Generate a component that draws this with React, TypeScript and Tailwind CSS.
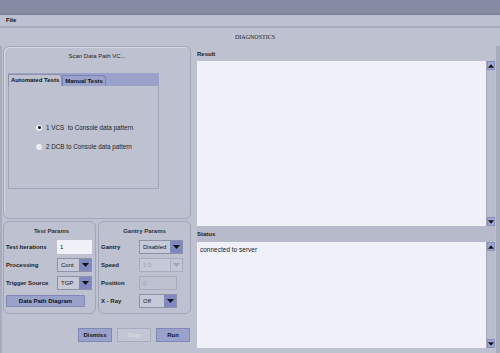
import React from 'react'

const font = { fontFamily: '"Liberation Sans", Arial, sans-serif' }

function Arrow({ up = false, dim = false }: { up?: boolean; dim?: boolean }) {
  return (
    <svg width="7" height="4" viewBox="0 0 7 4">
      <polygon points={up ? '0,4 7,4 3.5,0' : '0,0 7,0 3.5,4'} fill={dim ? '#9ea2b6' : '#111'} />
    </svg>
  )
}

function Select({ value, w, disabled = false }: { value: string; w: string; disabled?: boolean }) {
  return (
    <div className={`flex h-[14px] ${w} border ${disabled ? 'border-[#a9acbd]' : 'border-[#8e92a8]'} bg-[#c6c9d7]`}>
      <span className={`flex-1 px-[3px] text-[6px] leading-[12px] ${disabled ? 'text-[#9a9eb2]' : 'text-[#111]'}`}>{value}</span>
      <span className={`flex w-[12px] items-center justify-center ${disabled ? 'bg-[#c3c6d4] border-l border-[#a9acbd]' : 'bg-[#7f89bf]'}`}>
        <Arrow dim={disabled} />
      </span>
    </div>
  )
}

function Scrollbar() {
  return (
    <div className="flex w-[9px] flex-col justify-between border-l border-[#a3a7bb] bg-[#b9bccc]">
      <div className="flex h-[9px] items-center justify-center bg-[#a0a8d0] border border-[#8790bf]"><Arrow up /></div>
      <div className="flex h-[9px] items-center justify-center bg-[#a0a8d0] border border-[#8790bf]"><Arrow /></div>
    </div>
  )
}

function Row({ label, lw, children }: { label: string; lw: string; children: React.ReactNode }) {
  return (
    <div className="flex items-center">
      <span className={`${lw} whitespace-nowrap text-[6px] font-bold text-[#222]`}>{label}</span>
      {children}
    </div>
  )
}

export default function App() {
  return (
    <div style={font} className="flex h-[353px] w-[500px] flex-col overflow-hidden bg-[#bec1d0] text-[#111]">
      <div className="h-[15px] bg-[#868ba4] border-b border-[#7a7f98]"></div>
      <div className="flex h-[13px] items-center border-b-2 border-[#a8abbd] bg-[#bcc0d0] px-[6px] text-[6px] font-bold">File</div>
      <div className="flex h-[18px] items-center justify-center pl-[10px] text-[6px] text-[#222]" style={{ fontFamily: '"Liberation Serif", serif' }}>DIAGNOSTICS</div>

      <div className="flex flex-1 border-l-2 border-[#a9acbd]">
        {/* left column */}
        <div className="flex w-[189px] flex-col pl-[1px]">
          <div className="flex h-[173px] flex-col rounded-[6px] border border-[#a3a6b8] shadow-[inset_1px_1px_0_#d6d8e2]">
            <div className="pt-[5px] text-center text-[6px] text-[#222]">Scan Data Path VC...</div>
            <div className="ml-[4px] mt-[12px] flex h-[116px] w-[151px] flex-col">
              <div className="flex h-[13px] items-end bg-[#9aa2cc] pt-[1px]">
                <div className="flex h-[12px] items-center rounded-tr-[4px] border border-b-0 border-[#8e92a8] bg-[#bec1d0] px-[2px] text-[6px] font-bold">Automated Tests</div>
                <div className="flex h-[11px] items-center rounded-tr-[4px] border border-b-0 border-[#7a83b5] bg-[#9aa2cc] px-[2px] text-[6px] font-bold">Manual Tests</div>
              </div>
              <div className="flex flex-1 flex-col gap-[10px] border border-t-0 border-[#a3a6b8] pl-[27px] pt-[37px]">
                <div className="flex items-center gap-[4px]">
                  <span className="flex h-[6px] w-[6px] items-center justify-center rounded-full bg-[#eceef5]"><span className="h-[3px] w-[3px] rounded-full bg-[#111]"></span></span>
                  <span className="whitespace-pre text-[6.3px] text-[#222]">1 VCS  to Console data pattern</span>
                </div>
                <div className="flex items-center gap-[4px]">
                  <span className="h-[6px] w-[6px] rounded-full bg-[#eceef5]"></span>
                  <span className="text-[6.3px] text-[#222]">2 DCB to Console data pattern</span>
                </div>
              </div>
            </div>
          </div>

          <div className="mt-[2px] flex h-[93px] gap-[2px]">
            <div className="flex w-[93px] flex-col gap-[4px] rounded-[6px] border border-[#a3a6b8] px-[2px] pt-[5px]">
              <div className="pl-[4px] text-center text-[6px] font-bold text-[#333]">Test Params</div>
              <Row label="Test Iterations" lw="w-[51px]">
                <span className="h-[14px] w-[35px] bg-[#f0f1f8] px-[3px] text-[6px] leading-[14px]">1</span>
              </Row>
              <Row label="Processing" lw="w-[51px]"><Select value="Cont" w="w-[35px]" /></Row>
              <Row label="Trigger Source" lw="w-[51px]"><Select value="TGP" w="w-[35px]" /></Row>
              <div className="mt-[1px] flex h-[12px] w-[79px] items-center justify-center rounded-[1px] border border-[#7f88b8] bg-[#9aa2cc] text-[6px] font-bold">Data Path Diagram</div>
            </div>
            <div className="flex w-[93px] flex-col gap-[4px] rounded-[6px] border border-[#a3a6b8] px-[2px] pt-[5px]">
              <div className="text-center text-[6px] font-bold text-[#333]">Gantry Params</div>
              <Row label="Gantry" lw="w-[38px]"><Select value="Disabled" w="w-[44px]" /></Row>
              <Row label="Speed" lw="w-[38px]"><Select value="2.0" w="w-[44px]" disabled /></Row>
              <Row label="Position" lw="w-[38px]">
                <span className="h-[14px] w-[38px] border border-[#a9acbd] px-[3px] text-[6px] leading-[12px] text-[#9a9eb2]">0</span>
              </Row>
              <Row label="X - Ray" lw="w-[38px]"><Select value="Off" w="w-[38px]" /></Row>
            </div>
          </div>

          <div className="mt-[14px] flex justify-end gap-[5px] pr-[1px]">
            <div className="flex h-[14px] w-[34px] items-center justify-center border border-[#7f88b8] bg-[#9aa2cc] text-[6px] font-bold">Dismiss</div>
            <div className="flex h-[14px] w-[34px] items-center justify-center border border-[#a9acbd] bg-[#c3c6d4] text-[6px] font-bold text-[#d8dae4]">Stop</div>
            <div className="flex h-[14px] w-[34px] items-center justify-center border border-[#7f88b8] bg-[#9aa2cc] text-[6px] font-bold">Run</div>
          </div>
        </div>

        {/* right column */}
        <div className="ml-[6px] flex flex-1 flex-col border-r-[4px] border-[#a9acbd] pr-[1px]">
          <div className="flex h-[15px] items-center pt-[1px] text-[6px] font-bold text-[#222]">Result</div>
          <div className="flex h-[165px] bg-[#eff0f8]">
            <div className="flex-1"></div>
            <Scrollbar />
          </div>
          <div className="flex h-[16px] items-center bg-[#b7bacb] text-[6px] font-bold text-[#222]">Status</div>
          <div className="flex flex-1 bg-[#eff0f8]">
            <div className="flex-1 px-[3px] pt-[3px] text-[6.5px] text-[#222]">connected to server</div>
            <Scrollbar />
          </div>
          <div className="h-[5px]"></div>
        </div>
      </div>
    </div>
  )
}
